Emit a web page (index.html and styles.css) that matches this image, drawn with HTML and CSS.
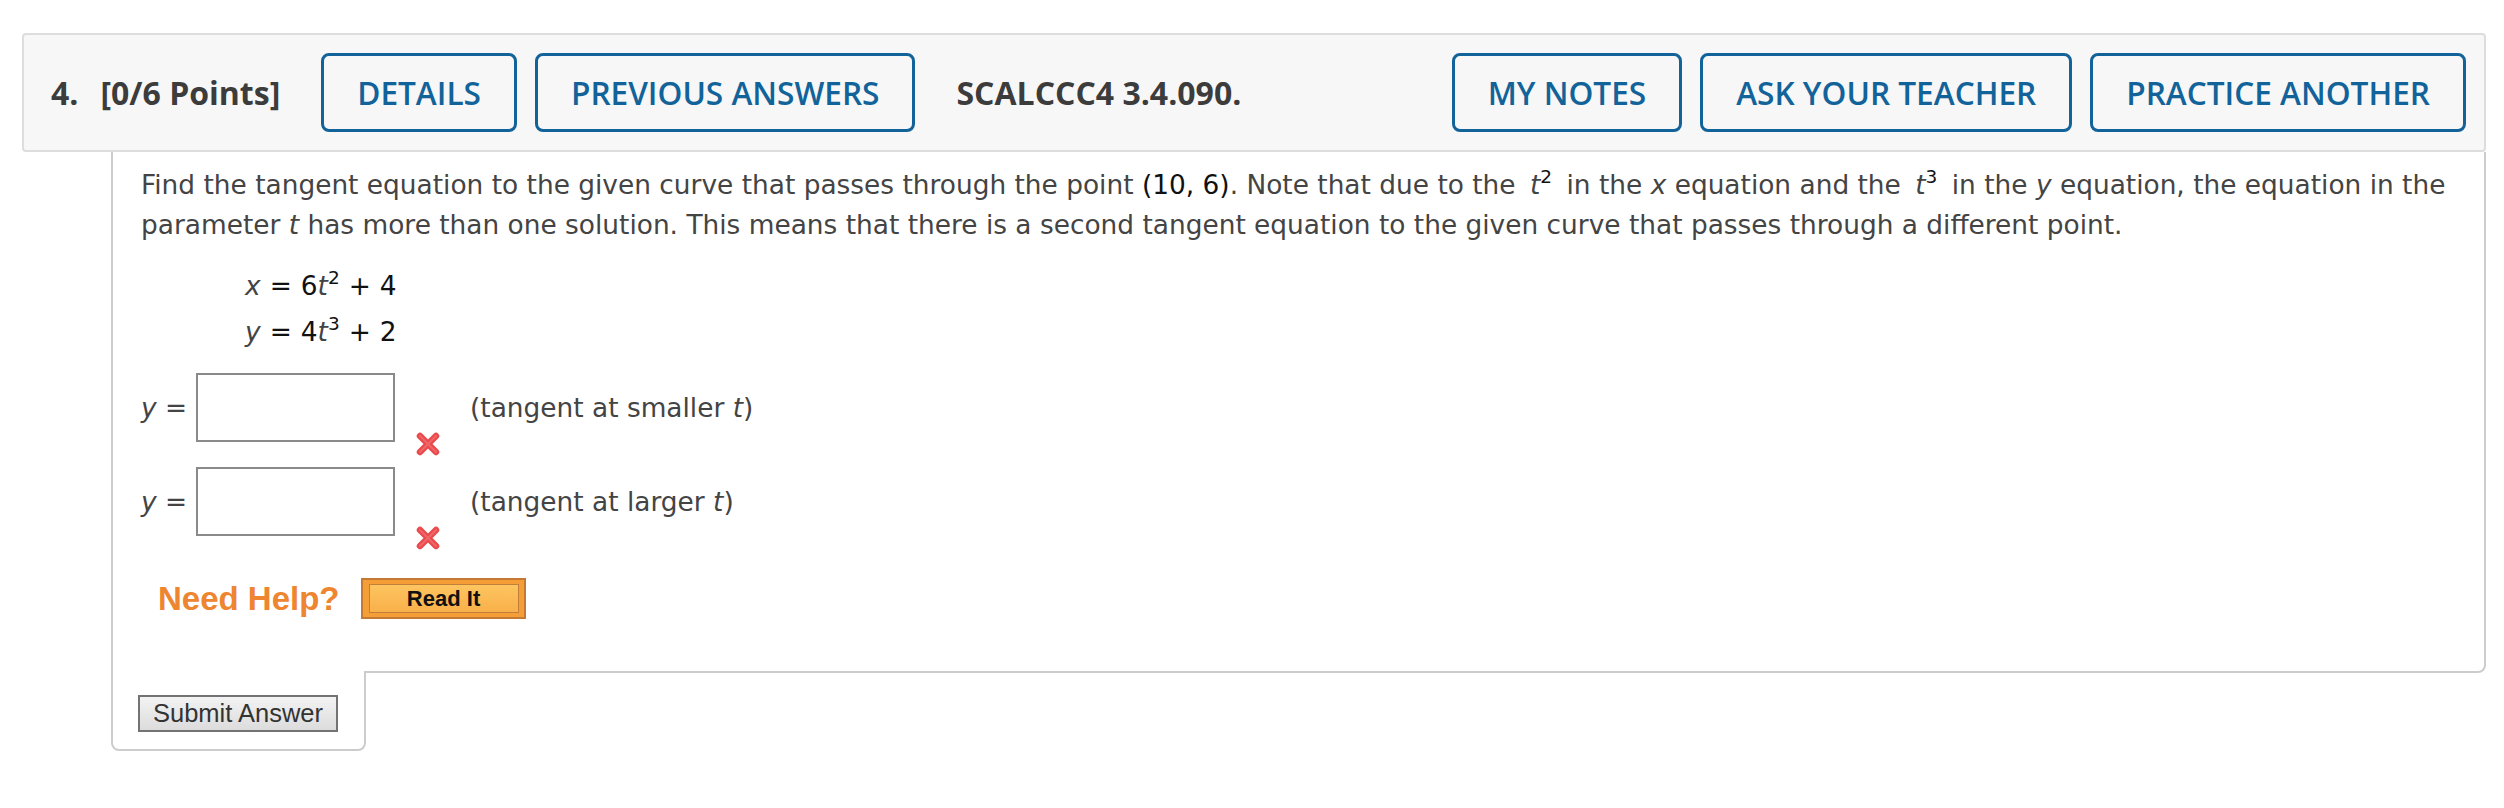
FILE: index.html
```html
<!DOCTYPE html>
<html lang="en">
<head>
<meta charset="utf-8">
<title>Question 4</title>
<link rel="stylesheet" href="styles.css">
</head>
<body>
<div class="question">
  <div class="qheader">
    <span class="qnum">4.</span>
    <span class="qpts">[0/6 Points]</span>
    <button class="hbtn">DETAILS</button>
    <button class="hbtn">PREVIOUS ANSWERS</button>
    <span class="qid">SCALCCC4 3.4.090.</span>
    <span class="spacer"></span>
    <button class="hbtn">MY NOTES</button>
    <button class="hbtn">ASK YOUR TEACHER</button>
    <button class="hbtn">PRACTICE ANOTHER</button>
  </div>
  <div class="qbody">
    <p class="prompt">Find the tangent equation to the given curve that passes through the point <span class="num">(10, 6)</span>. Note that due to the <span class="m"><i>t</i><sup>2</sup></span> in the <i>x</i> equation and the <span class="m"><i>t</i><sup>3</sup></span> in the <i>y</i> equation, the equation in the parameter <i>t</i> has more than one solution. This means that there is a second tangent equation to the given curve that passes through a different point.</p>
    <div class="eqs">
      <div class="eq"><i>x</i><span class="op">=</span><span class="num">6</span><i>t</i><sup>2</sup><span class="op">+</span><span class="num">4</span></div>
      <div class="eq"><i>y</i><span class="op">=</span><span class="num">4</span><i>t</i><sup>3</sup><span class="op">+</span><span class="num">2</span></div>
    </div>
    <div class="answers">
      <div class="arow">
        <span class="alabel"><i>y</i> =</span>
        <span class="abox"></span>
        <span class="mark"><svg viewBox="0 0 26 26" width="26" height="26"><path d="M5 5 L21 21 M21 5 L5 21" stroke="#ea4a4c" stroke-width="6.5" stroke-linecap="round"/><path d="M5 5 L21 21 M21 5 L5 21" stroke="#f47a7c" stroke-width="2" stroke-linecap="round" opacity="0.6"/></svg></span>
        <span class="anote">(tangent at smaller <i>t</i>)</span>
      </div>
      <div class="arow">
        <span class="alabel"><i>y</i> =</span>
        <span class="abox"></span>
        <span class="mark"><svg viewBox="0 0 26 26" width="26" height="26"><path d="M5 5 L21 21 M21 5 L5 21" stroke="#ea4a4c" stroke-width="6.5" stroke-linecap="round"/><path d="M5 5 L21 21 M21 5 L5 21" stroke="#f47a7c" stroke-width="2" stroke-linecap="round" opacity="0.6"/></svg></span>
        <span class="anote">(tangent at larger <i>t</i>)</span>
      </div>
    </div>
    <div class="help">
      <span class="needhelp">Need Help?</span>
      <span class="readit"><span class="readit-in">Read It</span></span>
    </div>
  </div>
  <div class="submit-tab">
    <button class="submit">Submit Answer</button>
  </div>
</div>
</body>
</html>
```
FILE: styles.css
```css
html, body {
  margin: 0;
  padding: 0;
  background: #ffffff;
}

.question {
  margin: 33px 18px 0 22px;
}

.qheader {
  display: flex;
  align-items: center;
  height: 115px;
  background: #f7f7f7;
  border: 2px solid #dddddd;
  border-radius: 4px;
  padding: 0 18px 0 27px;
  font-family: "Open Sans", "Liberation Sans", sans-serif;
  color: #3c3c3c;
}

.qnum {
  font-size: 32px;
  font-weight: 700;
  margin-right: 22px;
}

.qpts {
  font-size: 32px;
  font-weight: 700;
  margin-right: 41px;
}

.hbtn {
  font-family: "Open Sans", "Liberation Sans", sans-serif;
  font-size: 31.6px;
  font-weight: 600;
  color: #12639a;
  background: transparent;
  border: 3px solid #12639a;
  border-radius: 8px;
  height: 79px;
  padding: 0 33px;
  margin-right: 18px;
  cursor: pointer;
}

.qid {
  font-size: 32px;
  font-weight: 700;
  margin-left: 23px;
}

.spacer {
  flex: 1;
}

.hbtn:last-child {
  margin-right: 0;
}

.qbody {
  margin-left: 89px;
  border: 2px solid #cccccc;
  border-top: none;
  border-bottom-right-radius: 8px;
  padding: 13px 28px 52px 28px;
  font-family: "DejaVu Sans", Verdana, sans-serif;
  font-size: 26.4px;
  color: #444444;
}

.prompt {
  margin: 0;
  line-height: 40px;
}

.num {
  color: #111111;
}

.m {
  margin: 0 6px;
}

sup {
  font-size: 70%;
  line-height: 0;
  vertical-align: 0.6em;
  color: #111111;
}

.eqs {
  margin: 18px 0 0 104px;
}

.eq {
  line-height: 46px;
}

.op {
  color: #111111;
  margin: 0 9px;
}

.answers {
  margin-top: 18px;
}

.arow {
  display: flex;
  align-items: center;
  height: 69px;
  margin-bottom: 25px;
}

.alabel {
  width: 55px;
}

.abox {
  width: 195px;
  height: 65px;
  border: 2px solid #8a8a8a;
  background: #ffffff;
}

.mark {
  align-self: flex-end;
  width: 26px;
  height: 26px;
  margin: 0 29px -15px 20px;
}

.mark svg {
  display: block;
}

.help {
  display: flex;
  align-items: center;
  margin-top: 42px;
  padding-left: 17px;
}

.needhelp {
  font-family: "Liberation Sans", Arial, sans-serif;
  font-weight: 700;
  font-size: 33px;
  color: #ee8530;
  margin-right: 21px;
}

.readit {
  display: inline-block;
  width: 161px;
  height: 37px;
  box-sizing: content-box;
  border: 2px solid #c47a34;
  background: #f59d36;
  padding: 0;
}

.readit-in {
  display: flex;
  align-items: center;
  justify-content: center;
  box-sizing: border-box;
  margin: 4px 5px 0 6px;
  height: 29px;
  border: 1px solid #c0803c;
  background: linear-gradient(#fdc560, #f9b04a);
  font-family: "Liberation Sans", Arial, sans-serif;
  font-weight: 700;
  font-size: 22px;
  color: #111111;
}

.submit-tab {
  position: relative;
  width: 200px;
  margin: -2px 0 0 89px;
  background: #ffffff;
  border: 2px solid #cccccc;
  border-top: none;
  border-radius: 0 0 8px 8px;
  padding: 24px 26px 17px 25px;
}

.submit {
  display: block;
  width: 200px;
  height: 37px;
  font-family: "Liberation Sans", Arial, sans-serif;
  font-size: 25.5px;
  color: #333333;
  background: linear-gradient(#f3f3f3, #dcdcdc);
  border: 2px solid #737373;
  padding: 0;
}
```
